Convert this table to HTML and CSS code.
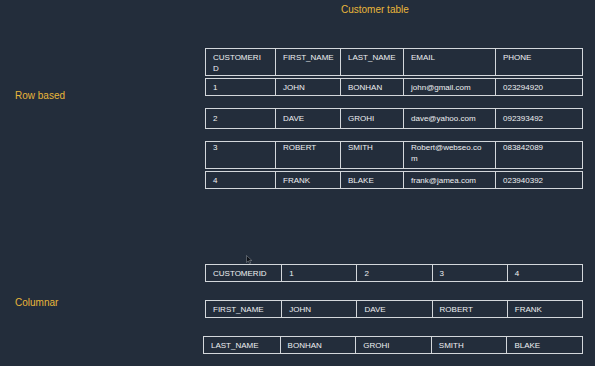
FILE: index.html
```html
<!DOCTYPE html>
<html>
<head>
    <title>Customer table</title>
    <link rel="stylesheet" href="styles.css">
</head>
<body>
    <main class="page">
        <h1 class="title">Customer table</h1>

        <section class="group rows">
            <h2 class="group-label">Row based</h2>
            <div class="records">
                <div class="record head">
                    <span>CUSTOMERID</span><span>FIRST_NAME</span><span>LAST_NAME</span><span>EMAIL</span><span>PHONE</span>
                </div>
                <div class="record gap-sm">
                    <span>1</span><span>JOHN</span><span>BONHAN</span><span>john@gmail.com</span><span>023294920</span>
                </div>
                <div class="record loose gap-lg">
                    <span>2</span><span>DAVE</span><span>GROHI</span><span>dave@yahoo.com</span><span>092393492</span>
                </div>
                <div class="record top gap-lg">
                    <span>3</span><span>ROBERT</span><span>SMITH</span><span>Robert@webseo.com</span><span>083842089</span>
                </div>
                <div class="record gap-sm">
                    <span>4</span><span>FRANK</span><span>BLAKE</span><span>frank@jamea.com</span><span>023940392</span>
                </div>
            </div>
        </section>

        <section class="group columns">
            <h2 class="group-label">Columnar</h2>
            <div class="fields">
                <div class="field">
                    <span>CUSTOMERID</span><span>1</span><span>2</span><span>3</span><span>4</span>
                </div>
                <div class="field">
                    <span>FIRST_NAME</span><span>JOHN</span><span>DAVE</span><span>ROBERT</span><span>FRANK</span>
                </div>
                <div class="field shifted">
                    <span>LAST_NAME</span><span>BONHAN</span><span>GROHI</span><span>SMITH</span><span>BLAKE</span>
                </div>
            </div>
        </section>

        <!-- mouse pointer -->
        <svg class="cursor" viewBox="0 0 7 9">
            <polygon points="0.5,0.5 0.5,7.5 2.3,5.9 3.6,8.6 4.7,8.1 3.5,5.5 5.9,5.5" fill="#0d1117" stroke="#9aa1a9" stroke-width="0.5"/>
        </svg>
    </main>
</body>
</html>
```

FILE: styles.css
```css
body {
    margin: 0;
    background-color: #232d3b;
    font-family: "Liberation Sans", Arial, sans-serif;
    color: #eef0f2;
}

.page {
    position: relative;
    height: 366px;
}

.title {
    margin: 0;
    padding: 4px 0 0 341px;
    font-size: 10px;
    line-height: 12px;
    font-weight: normal;
    color: #e8b63a;
}

.group {
    display: grid;
    grid-template-columns: 205px 378px;
}

.rows {
    margin-top: 32px;
}

.columns {
    margin-top: 75px;
}

.group-label {
    margin: 0;
    padding-left: 15px;
    font-size: 10px;
    line-height: 12px;
    font-weight: normal;
    color: #e8b63a;
}

.rows .group-label {
    padding-top: 42px;
}

.columns .group-label {
    padding-top: 33px;
}

.record, .field {
    display: grid;
    border: 1px solid #d3d7db;
    font-size: 8px;
    line-height: 11px;
}

.record {
    grid-template-columns: 69px 65px 63px 92px 87px;
}

.field {
    grid-template-columns: repeat(5, 1fr);
}

.record span, .field span {
    padding: 3px 5px 2px 7px;
    word-break: break-all;
}

.record span + span, .field span + span {
    border-left: 1px solid #d3d7db;
}

/* id and email columns wrap their long values */
.record span:nth-child(1), .record span:nth-child(4) {
    padding-right: 10px;
}

.record.head span {
    padding-bottom: 1px;
}

.record.loose span {
    padding-top: 4px;
    padding-bottom: 4px;
}

.record.top span {
    padding-top: 0;
    padding-bottom: 4px;
}

.gap-sm {
    margin-top: 2px;
}

.gap-lg {
    margin-top: 12px;
}

.fields {
    display: flex;
    flex-direction: column;
    gap: 18px;
}

.field.shifted {
    margin-left: -2px;
}

.cursor {
    position: absolute;
    left: 246px;
    top: 255px;
    width: 7px;
    height: 9px;
}
```
